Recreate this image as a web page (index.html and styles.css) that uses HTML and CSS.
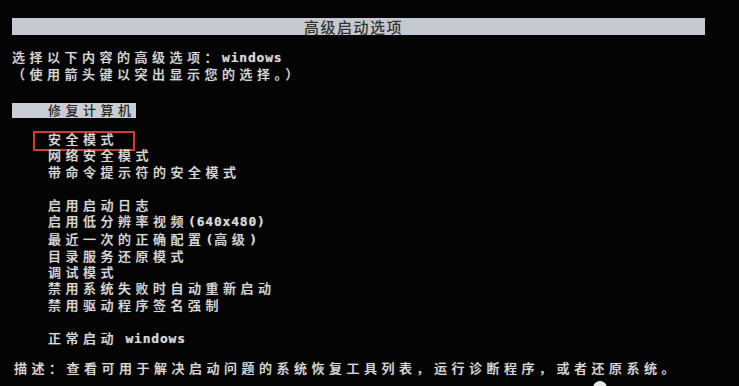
FILE: index.html
```html
<!DOCTYPE html>
<html lang="zh-CN">
<head>
<meta charset="utf-8">
<title>高级启动选项</title>
<link rel="stylesheet" href="styles.css">
</head>
<body>
<div class="screen">
  <div class="titlebar">高级启动选项</div>
  <div class="prompt">
    <p>选择以下内容的高级选项：<span class="lat">windows</span></p>
    <p>（使用箭头键以突出显示您的选择。）</p>
  </div>
  <div class="selected"><span class="selbar">修复计算机</span></div>
  <ul class="group first">
    <li class="boxed">安全模式</li>
    <li>网络安全模式</li>
    <li>带命令提示符的安全模式</li>
  </ul>
  <ul class="group">
    <li>启用启动日志</li>
    <li>启用低分辨率视频<span class="lat">(640x480)</span></li>
    <li>最近一次的正确配置<span class="lat">(</span>高级<span class="lat">)</span></li>
    <li>目录服务还原模式</li>
    <li>调试模式</li>
    <li>禁用系统失败时自动重新启动</li>
    <li>禁用驱动程序签名强制</li>
  </ul>
  <ul class="group">
    <li>正常启动 <span class="lat">windows</span></li>
  </ul>
  <p class="desc">描述：查看可用于解决启动问题的系统恢复工具列表，运行诊断程序，或者还原系统。</p>
  <div class="mark"></div>
</div>
</body>
</html>
```

FILE: styles.css
```css
html, body {
  margin: 0;
  padding: 0;
  background: #040404;
}

.screen {
  position: relative;
  width: 739px;
  height: 386px;
  overflow: hidden;
  box-sizing: border-box;
  padding: 18px 0 0 12px;
  background: #040404;
  color: #d8d8d8;
  font-family: "Noto Sans CJK SC", "DejaVu Sans", sans-serif;
  font-size: 13px;
  font-weight: 500;
  line-height: 16.3px;
  letter-spacing: 4.5px;
  text-shadow: 0 0 1px rgba(255,255,255,0.5);
}

.titlebar {
  width: 693px;
  height: 17px;
  line-height: 17px;
  background: #c5c9d2;
  color: #333333;
  text-align: center;
  box-sizing: border-box;
  padding-right: 10px;
  font-size: 15px;
  letter-spacing: 1.5px;
  text-shadow: none;
}

.prompt {
  margin-top: 14px;
}

.prompt p {
  margin: 0;
}

.lat {
  font-family: "DejaVu Sans Mono", monospace;
  font-size: 13px;
  font-weight: bold;
  letter-spacing: 0.8px;
}

.selected {
  margin-top: 19.5px;
  height: 15px;
}

.selbar {
  display: inline-block;
  height: 15px;
  line-height: 14px;
  padding-left: 36px;
  letter-spacing: 4.5px;
  background: #c9cdd5;
  color: #262626;
  text-shadow: none;
}

.group {
  list-style: none;
  margin: 17px 0 0 36px;
  padding: 0;
}

.group.first {
  margin-top: 14px;
}

.group li {
  position: relative;
}

.boxed::before {
  content: "";
  position: absolute;
  left: -15px;
  top: 0;
  width: 102px;
  height: 20px;
  box-sizing: border-box;
  border: 2px solid #d23a3a;
}

.desc {
  margin: 12.7px 0 0 2px;
}

.mark {
  position: absolute;
  left: 593px;
  top: 381px;
  width: 14px;
  height: 14px;
  border-radius: 50%;
  background: #e8e8e8;
}
```
